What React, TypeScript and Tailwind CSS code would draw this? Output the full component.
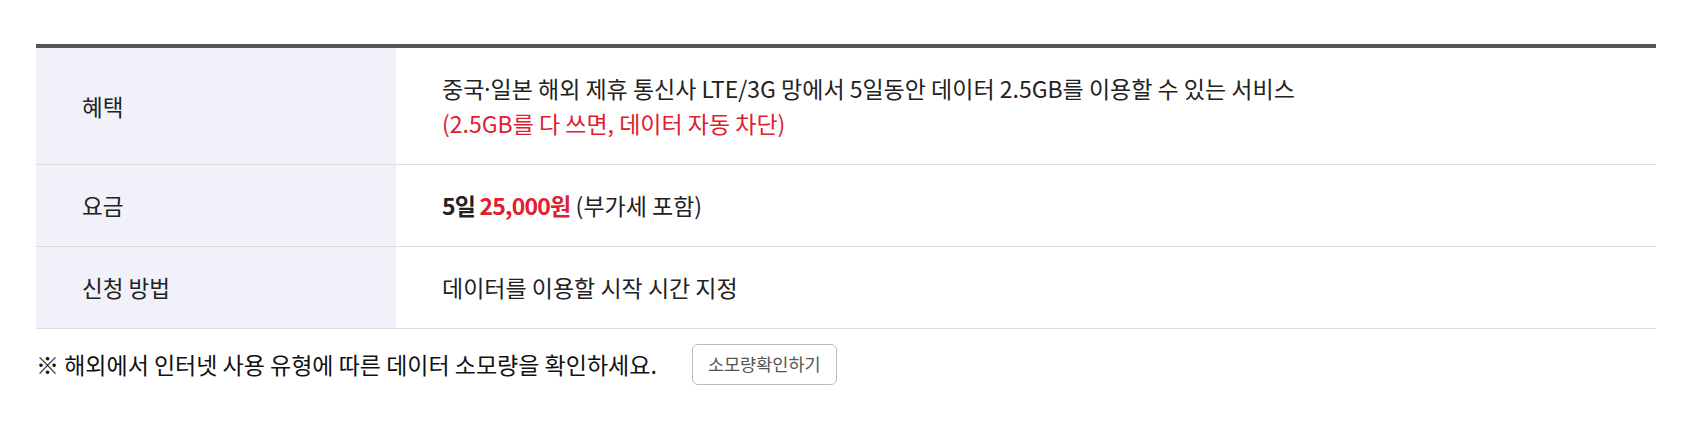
import React from "react";

const rows = [
  {
    label: "혜택",
    content: (
      <>
        <div>
          중국<span className="leading-[1]" style={{ fontFamily: '"Noto Sans", sans-serif' }}>·</span>일본 해외 제휴 통신사 LTE/3G 망에서 5일동안 데이터 2.5GB를 이용할 수 있는 서비스
        </div>
        <div className="text-[#e0202f]">(2.5GB를 다 쓰면, 데이터 자동 차단)</div>
      </>
    ),
    pad: "py-[23px]",
  },
  {
    label: "요금",
    content: (
      <div>
        <span className="font-bold text-[#222] tracking-[-0.8px]">5일 </span>
        <span className="font-bold text-[#e0202f] tracking-[-0.8px]">25,000원</span> (부가세 포함)
      </div>
    ),
    pad: "py-[23px]",
  },
  {
    label: "신청 방법",
    content: <div>데이터를 이용할 시작 시간 지정</div>,
    pad: "py-[23px]",
  },
];

export default function App() {
  return (
    <div
      className="bg-white w-[1681px] h-[430px] pt-[44px] pl-[36px] text-[#222]"
      style={{ fontFamily: '"Noto Sans CJK KR", "Noto Sans", sans-serif' }}
    >
      <div className="w-[1620px] border-t-4 border-[#555]">
        {rows.map((r, i) => (
          <div key={i} className="flex border-b border-[#dcdcdc]">
            <div className="w-[360px] shrink-0 bg-[#f0f1f9] pl-[46px] flex items-center text-[22.5px] leading-[35px]">
              {r.label}
            </div>
            <div className={`flex-1 pl-[46px] text-[23px] leading-[35px] ${r.pad}`}>{r.content}</div>
          </div>
        ))}
      </div>
      <div className="flex items-center mt-[15px] h-[41px]">
        <span className="text-[23px] text-[#111]">※ 해외에서 인터넷 사용 유형에 따른 데이터 소모량을 확인하세요.</span>
        <button className="ml-[35px] w-[145px] h-[41px] border border-[#bbb] rounded-[6px] bg-white text-[17.5px] text-[#555] flex items-center justify-center">
          소모량확인하기
        </button>
      </div>
    </div>
  );
}
